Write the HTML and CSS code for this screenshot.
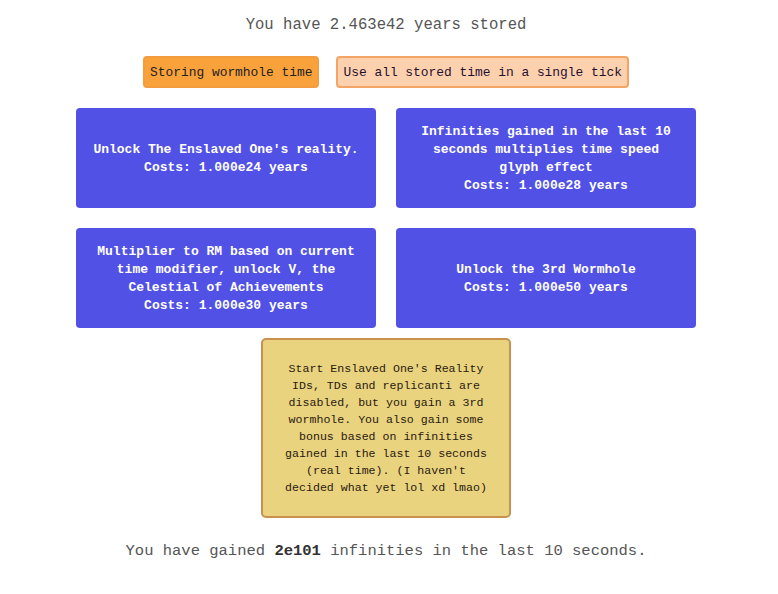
FILE: index.html
```html
<!DOCTYPE html>
<html>
<head>
<meta charset="utf-8">
<link rel="stylesheet" href="styles.css">
</head>
<body>
<div class="page">
  <div class="stored">You have 2.463e42 years stored</div>
  <div class="toggles">
    <button class="btn btn-store">Storing wormhole time</button>
    <button class="btn btn-use">Use all stored time in a single tick</button>
  </div>
  <div class="grid">
    <div class="upg">Unlock The Enslaved One's reality.<br>Costs: 1.000e24 years</div>
    <div class="upg">Infinities gained in the last 10 seconds multiplies time speed glyph effect<br>Costs: 1.000e28 years</div>
    <div class="upg">Multiplier to RM based on current time modifier, unlock V, the Celestial of Achievements<br>Costs: 1.000e30 years</div>
    <div class="upg">Unlock the 3rd Wormhole<br>Costs: 1.000e50 years</div>
  </div>
  <div class="reality">Start Enslaved One's Reality<br>IDs, TDs and replicanti are disabled, but you gain a 3rd wormhole. You also gain some bonus based on infinities gained in the last 10 seconds (real time). (I haven't decided what yet lol xd lmao)</div>
  <div class="gained">You have gained <b>2e101</b> infinities in the last 10 seconds.</div>
</div>
</body>
</html>
```
FILE: styles.css
```css
html, body {
  margin: 0;
  padding: 0;
  background: #ffffff;
}
.page {
  display: flex;
  flex-direction: column;
  align-items: center;
  padding-right: 6px;
  font-family: "Liberation Mono", "DejaVu Sans Mono", monospace;
}
.stored {
  margin-top: 15px;
  font-size: 15.6px;
  line-height: 20px;
  color: #555555;
}
.toggles {
  display: flex;
  gap: 17px;
  margin-top: 21px;
}
.btn {
  font-family: "Liberation Mono", "DejaVu Sans Mono", monospace;
  font-size: 12.9px;
  height: 32px;
  border-radius: 4px;
  padding: 0 5px;
  color: #222222;
  white-space: nowrap;
  cursor: pointer;
}
.btn-store {
  background: #f9a13b;
  border: 2px solid #f39d3f;
}
.btn-use {
  background: #fdd1ae;
  border: 2px solid #f4a465;
  color: #1f1030;
}
.grid {
  display: grid;
  grid-template-columns: 300px 300px;
  gap: 20px;
  margin-top: 20px;
}
.upg {
  height: 100px;
  box-sizing: border-box;
  background: #5151e6;
  border-radius: 4px;
  color: #ffffff;
  font-size: 13px;
  line-height: 18px;
  font-weight: bold;
  text-align: center;
  display: flex;
  align-items: center;
  justify-content: center;
  padding: 2px 14px 0;
}
.reality {
  margin-top: 10px;
  width: 250px;
  height: 180px;
  box-sizing: border-box;
  background: #e9d37f;
  border: 2px solid #c9914f;
  border-radius: 5px;
  padding: 20px 18px;
  font-size: 11.6px;
  line-height: 17px;
  color: #2a1a10;
  text-align: center;
}
.gained {
  margin-top: 23px;
  font-size: 15.5px;
  line-height: 20px;
  color: #555555;
}
.gained b {
  color: #333333;
}
```
